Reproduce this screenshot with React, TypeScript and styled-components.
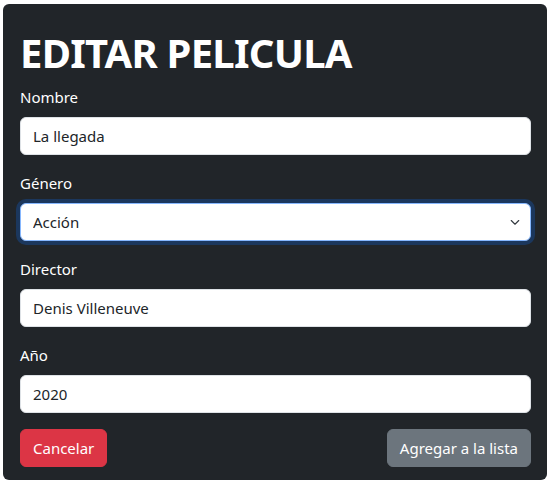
import * as React from "react"
import styled, { createGlobalStyle } from "styled-components"

const GlobalStyle = createGlobalStyle`
    html, body {
        margin: 0;
        padding: 0;
        background: #ffffff;
    }
    body {
        font-family: "Noto Sans", "Open Sans", sans-serif;
        font-size: 16px;
        line-height: 1.5;
        color: #212529;
    }
    * {
        box-sizing: border-box;
    }
`

const Page = styled.div`
    padding: 4px 4px 3px 3px;
`

const Card = styled.form`
    background: #212529;
    border-radius: 6px;
    padding: 25px 16px 13px 17px;
    color: #ffffff;
`

const Title = styled.h1`
    margin: 0 0 8px;
    font-size: 40px;
    line-height: 48px;
    font-weight: 700;
    letter-spacing: -0.75px;
`

const Group = styled.div`
    display: flex;
    flex-direction: column;
    margin-bottom: 16px;
`

const Label = styled.label`
    display: block;
    margin-bottom: 8px;
    font-size: 15px;
    line-height: 24px;
    color: #ffffff;
`

const Input = styled.input`
    display: block;
    width: 100%;
    height: 38px;
    padding: 6px 12px;
    font-family: inherit;
    font-size: 15px;
    line-height: 24px;
    color: #212529;
    background: #ffffff;
    border: 1px solid #dee2e6;
    border-radius: 6px;
    outline: none;
`

const SelectWrap = styled.div`
    position: relative;
`

const Select = styled.select<{ $focused?: boolean }>`
    display: block;
    width: 100%;
    height: 38px;
    padding: 6px 36px 6px 12px;
    font-family: inherit;
    font-size: 15px;
    line-height: 24px;
    color: #212529;
    background: #ffffff;
    border: 1px solid ${p => p.$focused ? "#86b7fe" : "#dee2e6"};
    border-radius: 6px;
    appearance: none;
    outline: none;
    box-shadow: ${p => p.$focused ? "0 0 0 4px rgba(13, 110, 253, 0.25)" : "none"};
`

const Chevron = styled.svg`
    position: absolute;
    right: 8px;
    top: 13px;
    width: 16px;
    height: 12px;
    pointer-events: none;
`

const Actions = styled.div`
    display: flex;
    justify-content: space-between;
    align-items: center;
`

const Button = styled.button<{ $variant: "danger" | "secondary" }>`
    height: 38px;
    padding: 6px 12px;
    font-family: inherit;
    font-size: 15px;
    line-height: 24px;
    color: #ffffff;
    border: 1px solid ${p => p.$variant === "danger" ? "#dc3545" : "#6c757d"};
    background: ${p => p.$variant === "danger" ? "#dc3545" : "#6c757d"};
    border-radius: 6px;
    cursor: pointer;
`

export default function App() {
    return (
        <Page>
            <GlobalStyle />
            <Card onSubmit={e => e.preventDefault()}>
                <Title>EDITAR PELICULA</Title>
                <Group>
                    <Label>Nombre</Label>
                    <Input defaultValue="La llegada" />
                </Group>
                <Group>
                    <Label>Género</Label>
                    <SelectWrap>
                        <Select $focused defaultValue="accion">
                            <option value="accion">Acción</option>
                            <option value="drama">Drama</option>
                            <option value="comedia">Comedia</option>
                        </Select>
                        <Chevron viewBox="0 0 16 16">
                            <path d="m3 6 5 5 5-5" fill="none" stroke="#343a40" strokeWidth="1.5" strokeLinecap="round" strokeLinejoin="round" />
                        </Chevron>
                    </SelectWrap>
                </Group>
                <Group>
                    <Label>Director</Label>
                    <Input defaultValue="Denis Villeneuve" />
                </Group>
                <Group>
                    <Label>Año</Label>
                    <Input defaultValue="2020" />
                </Group>
                <Actions>
                    <Button type="button" $variant="danger">Cancelar</Button>
                    <Button type="submit" $variant="secondary">Agregar a la lista</Button>
                </Actions>
            </Card>
        </Page>
    )
}
